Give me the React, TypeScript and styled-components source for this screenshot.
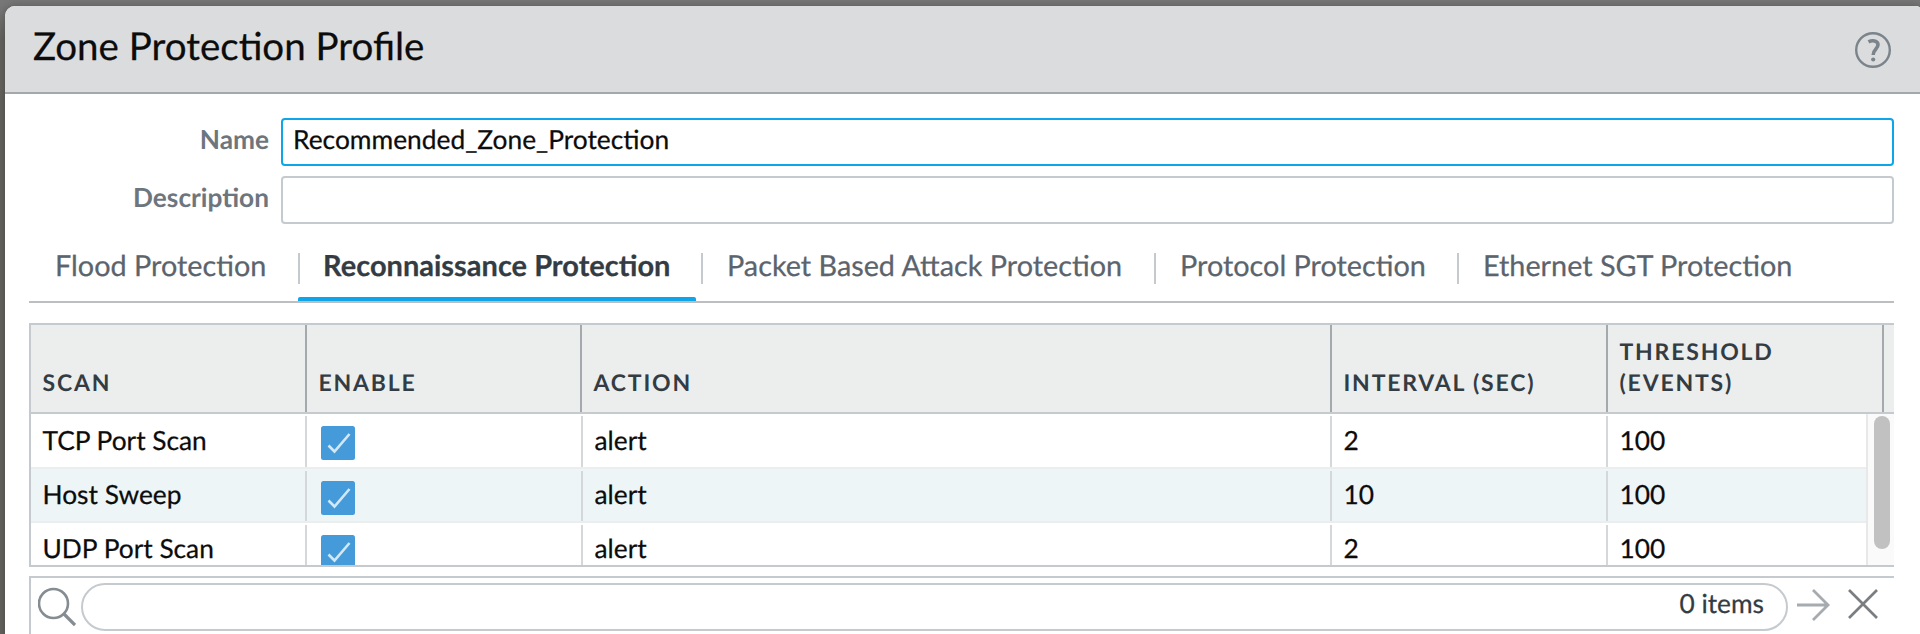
import React from "react";
import styled, { createGlobalStyle } from "styled-components";

const Global = createGlobalStyle`
  * { box-sizing: border-box; }
  html, body { margin: 0; height: 634px; overflow: hidden; background: linear-gradient(180deg, #777777 0, #777777 6px, #63625f 40px, #63625f 100%); }
  body { font-family: Lato, "Liberation Sans", sans-serif; color: #0c0c0c; text-rendering: geometricPrecision; }
`;

const Dialog = styled.main`
  margin: 6px 0 0 5px;
  width: 1920px;
  height: 640px;
  background: #fff;
  border-radius: 10px 10px 0 0;
  overflow: hidden;
  box-shadow: 0 0 8px rgba(0, 0, 0, 0.25);
`;

const Header = styled.header`
  height: 88px;
  display: flex;
  justify-content: space-between;
  align-items: flex-start;
  padding: 16px 34px 0 28px;
  background: #dbdcde;
  border-bottom: 2px solid #a3a8ad;
`;

const Title = styled.h1`
  margin: 0;
  font-size: 38.5px;
  line-height: 48px;
  font-weight: 400;
  -webkit-text-stroke: 0.25px currentColor;
`;

const HelpIcon = styled.svg`
  width: 36px;
  height: 36px;
  margin-top: 10px;
`;

const Body = styled.div`
  width: 1889px;
  padding: 24px 0 0 24px;
`;

const Field = styled.label`
  display: grid;
  grid-template-columns: 240px 1fr;
  column-gap: 12px;
  margin-bottom: 10px;
`;

const FieldLabel = styled.span`
  text-align: right;
  font-size: 26.25px;
  line-height: 43px;
  font-weight: 700;
  color: #6d767e;
`;

const Input = styled.input<{ $active?: boolean }>`
  width: 100%;
  height: 48px;
  padding: 0 10px 6px;
  border: 2px solid ${(p) => (p.$active ? "#0ea5e9" : "#c5cacf")};
  border-radius: 4px;
  outline: none;
  background: #fff;
  font: 400 26.35px Lato, sans-serif;
  color: #0c0c0c;
  text-rendering: geometricPrecision;
  -webkit-text-stroke: 0.25px currentColor;
`;

const Tabs = styled.nav`
  display: flex;
  height: 69px;
  border-bottom: 2px solid #bcbec0;
`;

const Tab = styled.div<{ $width: number; $active?: boolean }>`
  position: relative;
  width: ${(p) => p.$width}px;
  padding: 14px 0 0 ${(p) => (p.$active ? 25 : 26)}px;
  font-size: ${(p) => (p.$active ? 29 : 28.8)}px;
  line-height: 36px;
  font-weight: ${(p) => (p.$active ? 700 : 400)};
  color: ${(p) => (p.$active ? "#343c43" : "#5b646d")};
  white-space: nowrap;
  -webkit-text-stroke: 0.25px currentColor;
  &:not(:first-child)::before {
    content: "";
    position: absolute;
    left: 0;
    top: 19px;
    width: 2px;
    height: 31px;
    background: #c5cacf;
  }
`;

const ActiveBar = styled.span`
  position: absolute;
  left: 0;
  right: 5px;
  bottom: 0;
  height: 4px;
  border-radius: 2px 2px 0 0;
  background: #0ea5e9;
`;

const Grid = styled.section`
  margin-top: 20px;
  height: 244px;
  border: 2px solid #c5cacf;
  border-right: 0;
  overflow: hidden;
`;

const columns = "276px 275px 750px 276px 276px 1fr";

const HeadRow = styled.div`
  display: grid;
  grid-template-columns: ${columns};
  height: 89px;
  border-bottom: 2px solid #c5cacf;
  background: #eceeee;
`;

const HeadCell = styled.div`
  display: flex;
  align-items: flex-end;
  padding: 0 10px 14px 11.5px;
  border-right: 2px solid #a3a9ad;
  font-size: 23px;
  line-height: 31px;
  font-weight: 700;
  letter-spacing: 1.8px;
  color: #343c43;
  &:last-child { border-right: 0; padding: 0; }
`;

const Scroller = styled.div`
  display: flex;
  height: 151px;
`;

const Rows = styled.div`
  flex: 1;
`;

const Row = styled.div<{ $tall?: boolean; $shaded?: boolean }>`
  display: grid;
  grid-template-columns: 276px 276px 749px 276px 1fr;
  height: ${(p) => (p.$tall ? 55 : 54)}px;
  padding-top: 2px;
  border-bottom: 2px solid #eceeee;
  background: ${(p) => (p.$shaded ? "#edf5f7" : "#fff")};
  line-height: ${(p) => (p.$tall ? 38 : 36)}px;
`;

const Cell = styled.div`
  padding: 5px 0 0 11.5px;
  border-right: 2px solid #d5d8da;
  font-size: 26.3px;
  -webkit-text-stroke: 0.25px currentColor;
  &:last-child { border-right: 0; }
`;

const CheckBox = styled.svg`
  display: block;
  width: 34px;
  height: 34px;
  margin: 4.5px 0 0 2px;
`;

const Track = styled.div`
  width: 28px;
  padding: 2px 4px 0 6px;
  background: #fafafa;
  border-left: 2px solid #e8e8e8;
`;

const Thumb = styled.div`
  height: 133px;
  border-radius: 8px;
  background: #c1c1c1;
`;

const Footer = styled.footer`
  display: flex;
  margin-top: 9px;
  height: 70px;
  padding: 5px 0 0 7px;
  border: 2px solid #c5cacf;
  border-right: 0;
`;

const SearchIcon = styled.svg`
  width: 38px;
  height: 40px;
  margin: 4px 5px 0 0;
`;

const SearchBox = styled.div`
  width: 1707px;
  height: 48px;
  padding-right: 22px;
  border: 2px solid #c5cacf;
  border-radius: 24px;
  text-align: right;
  font-size: 26.3px;
  line-height: 37px;
  color: #343c43;
  -webkit-text-stroke: 0.25px currentColor;
`;

const ArrowIcon = styled.svg`
  width: 34px;
  height: 34px;
  margin: 5px 0 0 8px;
`;

const CloseIcon = styled.svg`
  width: 32px;
  height: 32px;
  margin: 5px 0 0 17px;
`;

const tabs = [
  { label: "Flood Protection", width: 269 },
  { label: "Reconnaissance Protection", width: 403, active: true },
  { label: "Packet Based Attack Protection", width: 453 },
  { label: "Protocol Protection", width: 303 },
  { label: "Ethernet SGT Protection", width: 400 },
];

const heads = ["SCAN", "ENABLE", "ACTION", "INTERVAL (SEC)", "THRESHOLD (EVENTS)", ""];

const scans = [
  { name: "TCP Port Scan", action: "alert", interval: 2, threshold: 100 },
  { name: "Host Sweep", action: "alert", interval: 10, threshold: 100 },
  { name: "UDP Port Scan", action: "alert", interval: 2, threshold: 100 },
];

const Check = () => (
  <CheckBox viewBox="0 0 34 34">
    <rect width="34" height="34" rx="2.5" fill="#459bd9" />
    <path d="M7.5 19.5 L13.5 25.5 L28.5 8" fill="none" stroke="#d3e8f7" strokeWidth="2.6" />
  </CheckBox>
);

export default function App() {
  return (
    <>
      <Global />
      <Dialog>
        <Header>
          <Title>Zone Protection Profile</Title>
          <HelpIcon viewBox="0 0 36 36" fill="none" stroke="#7b848b">
            <circle cx="18" cy="18" r="16.8" strokeWidth="2.4" />
            <path d="M13.5 9.8 C17 8 23 8.2 23 12.8 C23 17 18.2 17 18.2 23" strokeWidth="3.6" />
            <circle cx="18.2" cy="27.5" r="2.1" fill="#7b848b" stroke="none" />
          </HelpIcon>
        </Header>
        <Body>
          <Field>
            <FieldLabel>Name</FieldLabel>
            <Input $active defaultValue="Recommended_Zone_Protection" spellCheck={false} />
          </Field>
          <Field>
            <FieldLabel>Description</FieldLabel>
            <Input />
          </Field>
          <Tabs>
            {tabs.map((t) => (
              <Tab key={t.label} $width={t.width} $active={t.active}>
                {t.label}
                {t.active && <ActiveBar />}
              </Tab>
            ))}
          </Tabs>
          <Grid>
            <HeadRow>
              {heads.map((h) => (
                <HeadCell key={h}>{h}</HeadCell>
              ))}
            </HeadRow>
            <Scroller>
              <Rows>
                {scans.map((s, i) => (
                  <Row key={s.name} $tall={i === 0} $shaded={i === 1}>
                    <Cell>{s.name}</Cell>
                    <Cell><Check /></Cell>
                    <Cell>{s.action}</Cell>
                    <Cell>{s.interval}</Cell>
                    <Cell>{s.threshold}</Cell>
                  </Row>
                ))}
              </Rows>
              <Track><Thumb /></Track>
            </Scroller>
          </Grid>
          <Footer>
            <SearchIcon viewBox="0 0 38 40" fill="none" stroke="#858c92" strokeWidth="2.6">
              <circle cx="15.5" cy="16.5" r="14.5" />
              <path d="M26 27 L37 38" strokeWidth="3.2" />
            </SearchIcon>
            <SearchBox>0 items</SearchBox>
            <ArrowIcon viewBox="0 0 34 34" fill="none" stroke="#a5abaf" strokeWidth="2.8">
              <path d="M1 17 H32 M17 2 L32 17 L17 32" />
            </ArrowIcon>
            <CloseIcon viewBox="0 0 32 32" fill="none" stroke="#7a7e80" strokeWidth="2.7">
              <path d="M2 2 L30 30 M30 2 L2 30" />
            </CloseIcon>
          </Footer>
        </Body>
      </Dialog>
    </>
  );
}
